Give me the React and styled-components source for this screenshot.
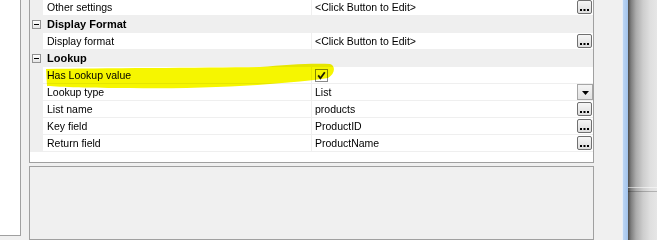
import React from "react";
import styled, { createGlobalStyle } from "styled-components";

const GlobalStyle = createGlobalStyle`
  html, body {
    margin: 0;
    padding: 0;
    background: #f0f0f0;
    overflow: hidden;
  }
  body {
    font-family: "Liberation Sans", Arial, sans-serif;
    font-size: 10.5px;
    color: #000;
  }
`;

const Page = styled.div`
  position: relative;
  display: flex;
  width: 657px;
  height: 240px;
  overflow: hidden;
  background: #f0f0f0;
`;

const LeftPanel = styled.div`
  width: 20px;
  height: 235px;
  background: #fff;
  border-right: 1px solid #a0a0a0;
  border-bottom: 1px solid #a0a0a0;
`;

const Column = styled.div`
  display: flex;
  flex-direction: column;
  gap: 3px;
  width: 565px;
  margin-left: 8px;
`;

const Grid = styled.div`
  margin-top: -1px;
  border: 1px solid #a0a0a0;
  border-top: none;
  background: #fff;
  padding-bottom: 10px;
`;

const Rows = styled.div`
  display: flex;
  flex-direction: column;
  gap: 1px;
  padding-bottom: 1px;
  background: #efefef;
`;

const Row = styled.div`
  display: grid;
  grid-template-columns: 13px 268px 1px 281px;
  height: 16px;
  line-height: 16px;
`;

const Gutter = styled.div`
  display: flex;
  align-items: center;
  padding-left: 2px;
`;

const MinusBox = styled.div`
  position: relative;
  width: 7px;
  height: 7px;
  border: 1px solid #919191;
  background: linear-gradient(#ffffff, #e4e4e4);
  &::after {
    content: "";
    position: absolute;
    left: 1px;
    top: 3px;
    width: 5px;
    height: 1px;
    background: #000;
  }
`;

const CategoryName = styled.div`
  grid-column: 2 / 5;
  padding-left: 4px;
  font-size: 11px;
  font-weight: bold;
`;

const Name = styled.div`
  grid-column: 2;
  background: #fff;
  padding-left: 4px;
  white-space: nowrap;
  overflow: hidden;
`;

const Value = styled.div`
  grid-column: 4;
  display: flex;
  align-items: center;
  justify-content: space-between;
  background: #fff;
  padding-left: 3px;
  padding-right: 1px;
  white-space: nowrap;
`;

const EllipsisButton = styled.div`
  display: flex;
  align-items: flex-end;
  justify-content: center;
  align-self: flex-start;
  box-sizing: border-box;
  width: 15px;
  height: 14px;
  margin-top: 1px;
  padding-bottom: 2px;
  border: 1px solid #707070;
  border-radius: 2px;
  background: linear-gradient(#f6f6f6, #dedede);
`;

const DropButton = styled.div`
  display: flex;
  align-items: center;
  justify-content: center;
  box-sizing: border-box;
  width: 16px;
  height: 16px;
  margin-right: -1px;
  padding-top: 1px;
  border: 1px solid #a6a6a6;
  background: linear-gradient(#f4f4f4, #e2e2e2);
`;

const CheckBox = styled.svg`
  display: block;
`;

const Description = styled.div`
  height: 110px;
  border: 1px solid #a0a0a0;
  background: #f0f0f0;
`;

const Gap = styled.div`
  width: 28px;
`;

const BlueBar = styled.div`
  width: 5px;
  border-left: 1px solid #e6eef8;
  background: linear-gradient(to right, #bcd5f3, #a2c3ec);
`;

const Shadow = styled.div`
  flex: 1;
  background: linear-gradient(
    to right,
    #4c4c4c 0,
    #7e7e7e 3px,
    #acacac 8px,
    #cdcdcd 15px,
    #dfdfdf 22px,
    #e6e6e6 100%
  );
`;

const WindowEdge = styled.div`
  margin-top: 187px;
  height: 3px;
  border-top: 1px solid rgba(255, 255, 255, 0.55);
  border-bottom: 1px solid rgba(0, 0, 0, 0.22);
`;

const Highlight = styled.svg`
  position: absolute;
  left: 0;
  top: 0;
  pointer-events: none;
  mix-blend-mode: multiply;
`;

const Dots = () => (
  <svg width="9" height="2" viewBox="0 0 9 2">
    <rect x="0" y="0" width="2" height="2" fill="#000" />
    <rect x="3.5" y="0" width="2" height="2" fill="#000" />
    <rect x="7" y="0" width="2" height="2" fill="#000" />
  </svg>
);

const Arrow = () => (
  <svg width="7" height="4" viewBox="0 0 7 4">
    <path d="M0 0 H7 L3.5 4 Z" fill="#000" />
  </svg>
);

const Check = () => (
  <CheckBox width="13" height="13" viewBox="0 0 13 13">
    <rect x="0.5" y="0.5" width="12" height="12" fill="#fff" stroke="#8a8a8a" />
    <path
      d="M3.2 6.4 L5.4 9.2 L9.8 3.2"
      fill="none"
      stroke="#1e1e1e"
      strokeWidth="1.8"
    />
  </CheckBox>
);

const rows = [
  { name: "Other settings", value: "<Click Button to Edit>", edit: "dots" },
  { category: "Display Format" },
  { name: "Display format", value: "<Click Button to Edit>", edit: "dots" },
  { category: "Lookup" },
  { name: "Has Lookup value", check: true },
  { name: "Lookup type", value: "List", edit: "drop" },
  { name: "List name", value: "products", edit: "dots" },
  { name: "Key field", value: "ProductID", edit: "dots" },
  { name: "Return field", value: "ProductName", edit: "dots" },
];

export default function App() {
  return (
    <Page>
      <GlobalStyle />
      <LeftPanel />
      <Column>
        <Grid>
          <Rows>
            {rows.map((r, i) =>
              r.category ? (
                <Row key={i}>
                  <Gutter>
                    <MinusBox />
                  </Gutter>
                  <CategoryName>{r.category}</CategoryName>
                </Row>
              ) : (
                <Row key={i}>
                  <Gutter />
                  <Name>{r.name}</Name>
                  <Value>
                    {r.check ? <Check /> : <span>{r.value}</span>}
                    {r.edit === "dots" && (
                      <EllipsisButton>
                        <Dots />
                      </EllipsisButton>
                    )}
                    {r.edit === "drop" && (
                      <DropButton>
                        <Arrow />
                      </DropButton>
                    )}
                  </Value>
                </Row>
              )
            )}
          </Rows>
        </Grid>
        <Description />
      </Column>
      <Gap />
      <BlueBar />
      <Shadow>
        <WindowEdge />
      </Shadow>
      <Highlight width="657" height="240" viewBox="0 0 657 240">
        <path
          d="M46 69 C100 68 200 68 260 67 C285 65 310 63 330 64 C336 66 335 74 328 78 C310 81 290 82 270 84 C230 87 180 89 130 88 C90 88 60 87 47 86 Z"
          fill="#f6f600"
        />
      </Highlight>
    </Page>
  );
}
